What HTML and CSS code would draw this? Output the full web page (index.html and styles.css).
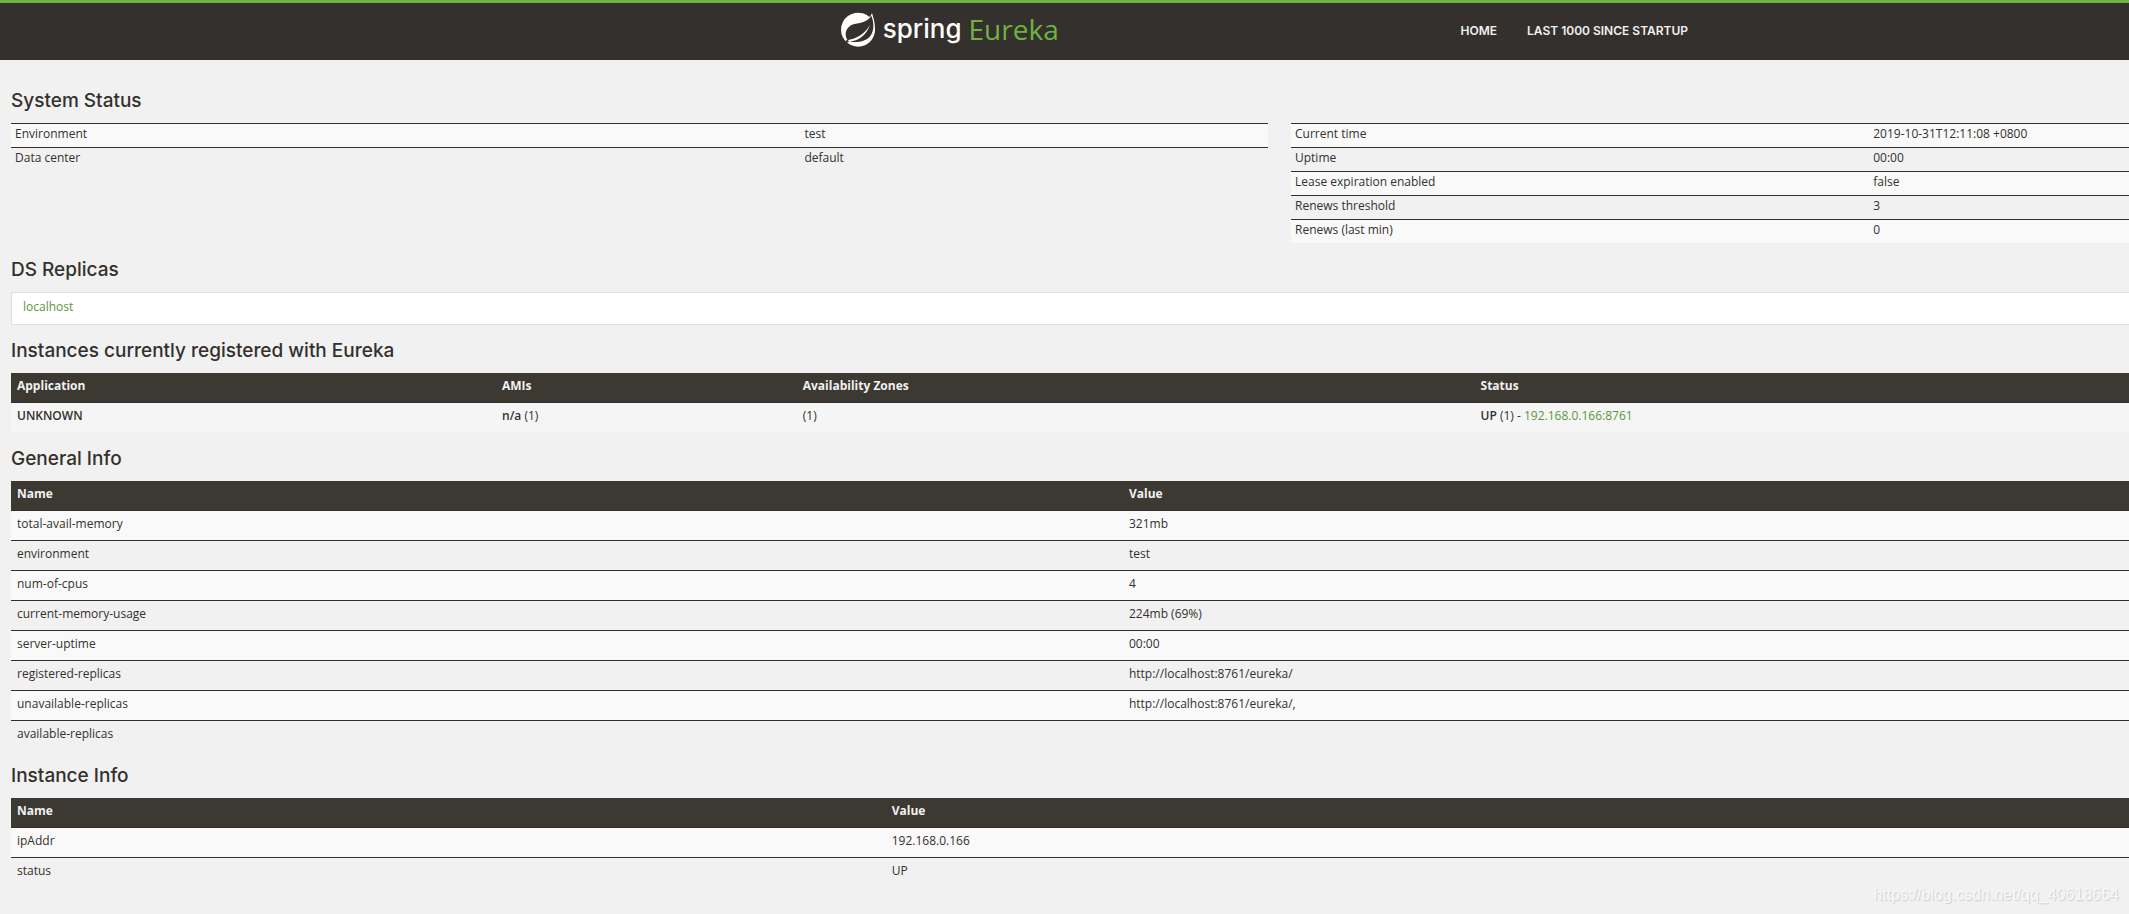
FILE: index.html
```html
<!DOCTYPE html>
<html lang="en">
<head>
<meta charset="utf-8">
<title>Eureka</title>
<link rel="stylesheet" href="styles.css">
</head>
<body>
<header class="navbar">
  <a class="brand" href="#">
    <svg class="brand-icon" viewBox="0 0 36 36" aria-hidden="true">
      <path fill="#fff" d="M32 2C31.300 3.900 30.300 5.200 29.500 6.100A17 17 0 1 0 35 17.500C35 11.500 33.300 6.500 32 2Z"/>
      <path fill="#34302d" d="M31.400 4.800C27 12 20 11.400 13.500 13.300C6 15.700 3.800 23 7.400 29.200C15 27.800 24 24.500 30 13.800C26.500 24 19.500 29.400 9.600 30.700C18 31.600 25 30.600 29.800 25.700C34.600 20 34 12 31.400 4.800Z"/>
      <circle cx="7.300" cy="30.300" r="1.300" fill="#34302d"/>
    </svg>
    <span class="brand-spring">spring</span>
    <span class="brand-eureka">Eureka</span>
  </a>
  <nav class="nav">
    <a href="#">Home</a>
    <a href="#">Last 1000 since startup</a>
  </nav>
</header>
<main class="content">
  <h1>System Status</h1>
  <div class="status">
    <table class="table condensed environment">
      <tbody>
        <tr><td>Environment</td><td>test</td></tr>
        <tr><td>Data center</td><td>default</td></tr>
      </tbody>
    </table>
    <table class="table condensed runtime">
      <tbody>
        <tr><td>Current time</td><td>2019-10-31T12:11:08 +0800</td></tr>
        <tr><td>Uptime</td><td>00:00</td></tr>
        <tr><td>Lease expiration enabled</td><td>false</td></tr>
        <tr><td>Renews threshold</td><td>3</td></tr>
        <tr><td>Renews (last min)</td><td>0</td></tr>
      </tbody>
    </table>
  </div>
  <h1>DS Replicas</h1>
  <ul class="replicas"><li><a href="#">localhost</a></li></ul>
  <h1>Instances currently registered with Eureka</h1>
  <table class="table instances">
    <thead><tr><th>Application</th><th>AMIs</th><th>Availability Zones</th><th>Status</th></tr></thead>
    <tbody><tr><td><b>UNKNOWN</b></td><td><b>n/a</b> (1)</td><td>(1)</td><td><b>UP</b> (1) - <a href="#">192.168.0.166:8761</a></td></tr></tbody>
  </table>
  <h1>General Info</h1>
  <table class="table general">
    <thead><tr><th>Name</th><th>Value</th></tr></thead>
    <tbody>
      <tr><td>total-avail-memory</td><td>321mb</td></tr>
      <tr><td>environment</td><td>test</td></tr>
      <tr><td>num-of-cpus</td><td>4</td></tr>
      <tr><td>current-memory-usage</td><td>224mb (69%)</td></tr>
      <tr><td>server-uptime</td><td>00:00</td></tr>
      <tr><td>registered-replicas</td><td>http://localhost:8761/eureka/</td></tr>
      <tr><td>unavailable-replicas</td><td>http://localhost:8761/eureka/,</td></tr>
      <tr><td>available-replicas</td><td></td></tr>
    </tbody>
  </table>
  <h1>Instance Info</h1>
  <table class="table instance">
    <thead><tr><th>Name</th><th>Value</th></tr></thead>
    <tbody>
      <tr><td>ipAddr</td><td>192.168.0.166</td></tr>
      <tr><td>status</td><td>UP</td></tr>
    </tbody>
  </table>
</main>
<div class="watermark">https://blog.csdn.net/qq_40618664</div>
</body>
</html>
```
FILE: styles.css
```css
* {
  box-sizing: border-box;
}

body {
  position: relative;
  min-height: 100vh;
  margin: 0;
  background: #f1f1f1;
  color: #34302d;
  font: 12px/18px "Open Sans", "Noto Sans", sans-serif;
}

a {
  color: #5a983a;
  text-decoration: none;
}

.navbar {
  display: grid;
  grid-template-columns: 68.6% 1fr;
  align-items: center;
  height: 60px;
  padding-bottom: 2px;
  border-top: 3px solid #6db33f;
  background: #34302d;
}

.brand {
  display: flex;
  align-items: center;
  gap: 7px;
  padding: 0 0 3px 57.5%;
  color: #fff;
}

.brand-icon {
  width: 36px;
  height: 36px;
}

.brand-spring {
  font: 500 26px/32px Inter, sans-serif;
}

.brand-eureka {
  color: #6db33f;
  font: 28px/32px "Open Sans", sans-serif;
}

.nav {
  display: flex;
  gap: 30px;
  font: 600 12px/18px Inter, sans-serif;
  text-transform: uppercase;
}

.nav a {
  color: #f1f1f1;
}

.content {
  padding: 30px 0 0 11px;
}

h1 {
  margin: 0;
  padding: 1px 0 12px;
  font: 500 19px/20px Inter, sans-serif;
}

.status {
  display: grid;
  grid-template-columns: 3fr 2fr;
  column-gap: 23px;
  align-items: start;
}

.table {
  width: 100%;
  margin-bottom: 16px;
  border-collapse: separate;
  border-spacing: 0;
  table-layout: fixed;
}

.table th,
.table td {
  height: 30px;
  padding: 4px 6px 7px;
  border-top: 1px solid #34302d;
  text-align: left;
  vertical-align: top;
}

.table th {
  height: 29px;
  padding: 4px 6px;
  border-top: 0;
  background: #3c3832;
  color: #f1f1f1;
  font-weight: 700;
}

.table b {
  font-weight: 600;
}

.table tbody tr:nth-child(odd) {
  background: #f9f9f9;
}

.table.condensed td {
  height: 24px;
  padding: 1px 4px 4px;
}

.environment td:first-child {
  width: 62.8%;
}

.runtime td:first-child {
  width: 69%;
}

.instances th:nth-child(1) {
  width: 22.9%;
}

.instances th:nth-child(2) {
  width: 14.2%;
}

.instances th:nth-child(3) {
  width: 32%;
}

.instances tbody tr:nth-child(odd) {
  background: #f5f5f5;
}

.table.general {
  margin-bottom: 15px;
}

.general th:first-child {
  width: 52.5%;
}

.instance th:first-child {
  width: 41.3%;
}

.replicas {
  margin: 0 0 15px;
  padding: 5px 11px 8px;
  border: 1px solid #ddd;
  border-right: 0;
  background: #fff;
  list-style: none;
}

.watermark {
  position: absolute;
  right: 10px;
  bottom: 10px;
  color: #f8f8f8;
  font: 16px/18px "Liberation Sans", sans-serif;
  text-shadow: 1px 1px 1px #ccc;
}
```
